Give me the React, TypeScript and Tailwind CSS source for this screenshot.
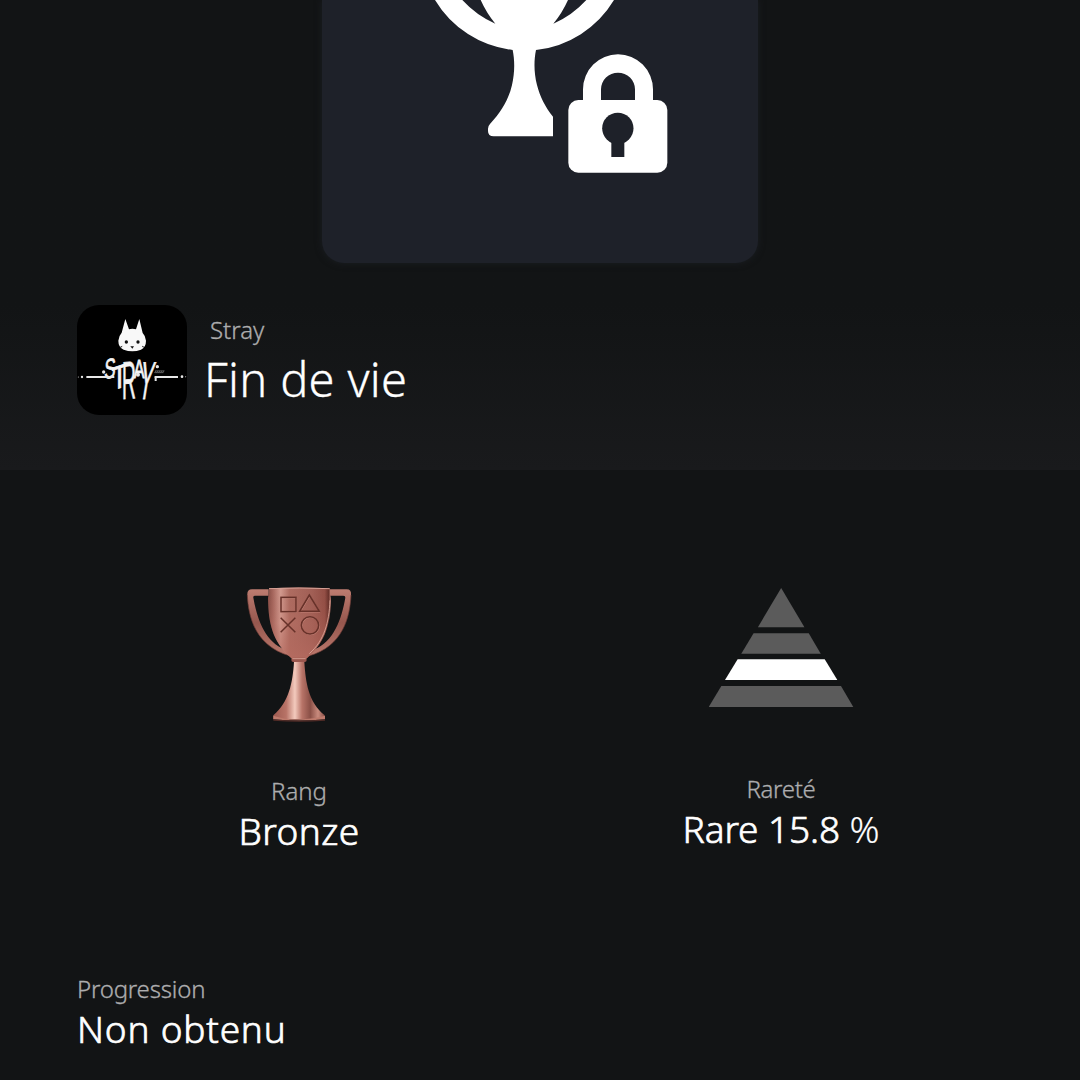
import type { ReactNode } from "react";
import clsx from "clsx";

const LockedTrophy = () => (
  <svg viewBox="36 0 1308 789" className="h-[263px] w-[436px]">
    <g fill="#ffffff">
      <path d="M375 0A313 313 0 0 0 608 150C614 180 615 215 606 255C597 295 575 335 540 372Q534 378 534 386V393Q534 409 551 409H729V350C705 320 690 290 681 255C671 215 672 180 678 150A313 313 0 0 0 912 0Z" />
      <path d="M819 302V268A105 105 0 0 1 1029 268V302H975V268A51 50 0 0 0 873 268V302Z" />
      <rect x="775" y="300" width="297" height="218" rx="30" />
    </g>
    <g fill="#1e2129">
      <path d="M457 0Q500 47 556 71Q530 40 512 0Z" />
      <path d="M829 0Q786 47 730 71Q756 40 774 0Z" />
      <circle cx="923.5" cy="385" r="47" />
      <rect x="904" y="420" width="39" height="51" />
    </g>
  </svg>
);

const GameIcon = () => (
  <svg viewBox="21 15 330 330" className="h-[110px] w-[110px] rounded-[22px] bg-black">
    {/* cat head */}
    <path
      d="M166 57L177 88Q187 85 198 88L208 57L218 99Q227 108 228 122Q228 142 213 149Q187 158 161 149Q145 142 145 122Q146 108 155 98Z"
      fill="#f8f8f8"
    />
    <g fill="#111111">
      <circle cx="169" cy="126" r="5" />
      <circle cx="204" cy="126" r="5" />
      <path d="M181 139H192L187 146Z" />
      <path d="M151 140L157 137V139L153 143ZM222 140L216 137V139L220 143Z" />
    </g>
    {/* scratched title */}
    <g
      fill="#f4f4f4"
      stroke="#f4f4f4"
      strokeWidth="2.5"
      fontFamily="'Liberation Sans', Arial, sans-serif"
    >
      <text transform="matrix(.6 -.12 -.05 1 102 238)" fontSize="84">S</text>
      <text transform="matrix(.78 -.26 0 1 125 272)" fontSize="98">T</text>
      <text transform="matrix(.36 -.03 0 1 156 298)" fontSize="160">R</text>
      <text transform="matrix(.62 0 0 1 191 234)" fontSize="78">A</text>
      <text transform="matrix(.38 0 -.16 1 202 296)" fontSize="160">Y</text>
    </g>
    <g fill="#e8e8e8">
      <rect x="49" y="228" width="84" height="6" rx="1" />
      <rect x="254" y="228" width="70" height="6" rx="1" />
      <rect x="254" y="229" width="6" height="14" />
      <circle cx="36" cy="231" r="3.5" />
      <circle cx="336" cy="230" r="4" />
      <circle cx="25" cy="231" r="1.5" />
      <circle cx="347" cy="230" r="1.5" />
      <circle cx="101" cy="216" r="5" />
      <circle cx="262" cy="200" r="5" />
      <circle cx="204" cy="224" r="6" />
    </g>
    <path d="M254 219L258 211M260 219L264 211M266 219L270 211M272 219L276 211M278 219L282 211M256 213H283M254 218H280" stroke="#8a8a8a" strokeWidth="1.6" />
  </svg>
);

const BronzeTrophy = () => (
  <svg viewBox="35 32 318 411" className="h-[137px] w-[106px]">
    <defs>
      <linearGradient id="cup" x1="0" x2="1">
        <stop offset="0" stopColor="#8c5149" />
        <stop offset="0.08" stopColor="#b06f65" />
        <stop offset="0.2" stopColor="#e0a79b" />
        <stop offset="0.34" stopColor="#b87468" />
        <stop offset="0.7" stopColor="#a9655b" />
        <stop offset="0.9" stopColor="#995248" />
        <stop offset="0.96" stopColor="#6b332c" />
        <stop offset="1" stopColor="#c58478" />
      </linearGradient>
      <linearGradient id="shade" x1="0" y1="0" x2="0" y2="1">
        <stop offset="0" stopColor="#5d2c26" stopOpacity="0.1" />
        <stop offset="0.5" stopColor="#a0594f" stopOpacity="0.25" />
        <stop offset="1" stopColor="#b4695e" stopOpacity="0.75" />
      </linearGradient>
      <linearGradient id="handle" x1="0" y1="0" x2="0" y2="1">
        <stop offset="0" stopColor="#bd7c70" />
        <stop offset="0.5" stopColor="#96574e" />
        <stop offset="1" stopColor="#bb796d" />
      </linearGradient>
      <linearGradient id="stem" x1="0" x2="1">
        <stop offset="0" stopColor="#9c594f" />
        <stop offset="0.25" stopColor="#b87367" />
        <stop offset="0.42" stopColor="#f3cabd" />
        <stop offset="0.56" stopColor="#b87468" />
        <stop offset="0.72" stopColor="#8a4f46" />
        <stop offset="0.87" stopColor="#c98b7e" />
        <stop offset="1" stopColor="#8a5047" />
      </linearGradient>
    </defs>
    <g fill="url(#handle)">
      <path d="M103 42H53Q38 42 39 59C42 125 63 213 168 242L152 222C92 201 68 130 57 67Q56 61 62 61H103Z" />
      <path d="M285 42H337Q352 42 350 59C347 125 326 213 223 242L239 222C298 201 322 130 333 67Q334 61 327 61H285Z" />
    </g>
    <path d="M39 59C42 125 63 213 168 242M350 59C347 125 326 213 223 242" fill="none" stroke="#6f3d36" strokeWidth="2" />
    <path d="M104 39Q194 34 286 39C285 55 290 62 290 72C288 142 277 197 216 250H173C112 197 103 142 101 72C101 62 105 55 104 39Z" fill="url(#cup)" />
    <path d="M104 39Q194 34 286 39C285 55 290 62 290 72C288 142 277 197 216 250H173C112 197 103 142 101 72C101 62 105 55 104 39Z" fill="url(#shade)" />
    <path d="M104 40Q194 36 286 40" fill="none" stroke="#d5a095" strokeWidth="3" />
    <path d="M287 75C284 142 270 195 225 235" fill="none" stroke="#dda99c" strokeWidth="2.5" />
    <path d="M179 259H210C214 322 222 379 271 420V432H117V420C164 379 175 322 179 259Z" fill="url(#stem)" />
    <path d="M117 421Q150 433 194 432T272 421V432Q194 439 117 432Z" fill="#bd7a6c" />
    <path d="M117 432Q194 439 272 432V436Q194 442 117 436Z" fill="#512b26" />
    <rect x="171" y="247" width="46" height="13" rx="6" fill="#9b574e" />
    <path d="M174 250H214" stroke="#d39a8c" strokeWidth="3" />
    <g fill="none" stroke="#d29386" strokeWidth="2" transform="translate(2 2)">
      <rect x="140" y="66" width="45" height="43" />
      <path d="M225 59L255 108H196Z" />
      <circle cx="227" cy="150" r="26" />
    </g>
    <g fill="none" stroke="#673129" strokeWidth="4.5">
      <rect x="140" y="66" width="45" height="43" />
      <path d="M225 59L255 108H196Z" />
      <path d="M139 127L183 171M183 127L139 171" />
      <circle cx="227" cy="150" r="26" />
    </g>
  </svg>
);

const RarityPyramid = () => (
  <svg viewBox="41 38 436 358" className="h-[119px] w-[145px]">
    <g fill="#5b5b5b">
      <path d="M258 38L328 156H188Z" />
      <path d="M175 174H341L377 236H138Z" />
      <path d="M78 333H438L475 396H40Z" />
    </g>
    <path d="M127 252H389L427 315H89Z" fill="#ffffff" />
  </svg>
);

interface LabelProps {
  className?: string;
  children: ReactNode;
}

const Label: React.FC<LabelProps> = ({ className, children }) => (
  <div
    className={clsx(
      "text-[24px] leading-8 font-light whitespace-nowrap text-[#adadae] [-webkit-text-stroke:0.3px]",
      className
    )}
  >
    {children}
  </div>
);

const Value: React.FC<LabelProps> = ({ className, children }) => (
  <div
    className={clsx(
      "text-[37px] leading-[48px] font-light whitespace-nowrap text-white [-webkit-text-stroke:0.7px]",
      className
    )}
  >
    {children}
  </div>
);

const App = () => {
  return (
    <div className="flex h-[1080px] w-[1080px] flex-col overflow-hidden bg-[#121415] font-['Noto_Sans','Open_Sans',sans-serif]">
      <header className="h-[470px] bg-linear-to-b from-[#121415] from-65% to-[#191a1c]">
        <div className="mx-auto h-[263px] w-[436px] overflow-hidden rounded-b-[22px] bg-[#1e2129] shadow-[0_0_7px_#1b1e23]">
          <LockedTrophy />
        </div>
        <div className="flex pt-[42px] pl-[77px]">
          <GameIcon />
          <div className="pt-[9px] pl-[17px]">
            <Label className="pl-[6px]">Stray</Label>
            <h1 className="pt-px text-[47px] leading-[64px] font-light tracking-[0.3px] whitespace-nowrap text-white [-webkit-text-stroke:0.3px]">
              Fin de vie
            </h1>
          </div>
        </div>
      </header>

      <main className="grid h-[503px] grid-cols-2 px-[58px]">
        <section className="flex flex-col items-center pt-[116px]">
          <BronzeTrophy />
          <Label className="mt-[52px]">Rang</Label>
          <Value className="tracking-[0.4px]">Bronze</Value>
        </section>
        <section className="flex flex-col items-center pt-[118px]">
          <RarityPyramid />
          <Label className="mt-[66px] tracking-[-0.3px]">Rareté</Label>
          <Value className="tracking-[-0.1px]">
            Rare 15.8 <span className="[-webkit-text-stroke:0.2px]">%</span>
          </Value>
        </section>
      </main>

      <footer className="pl-[77px]">
        <Label className="tracking-[-0.2px]">Progression</Label>
        <Value className="tracking-[0.8px]">Non obtenu</Value>
      </footer>
    </div>
  );
};

export default App;
